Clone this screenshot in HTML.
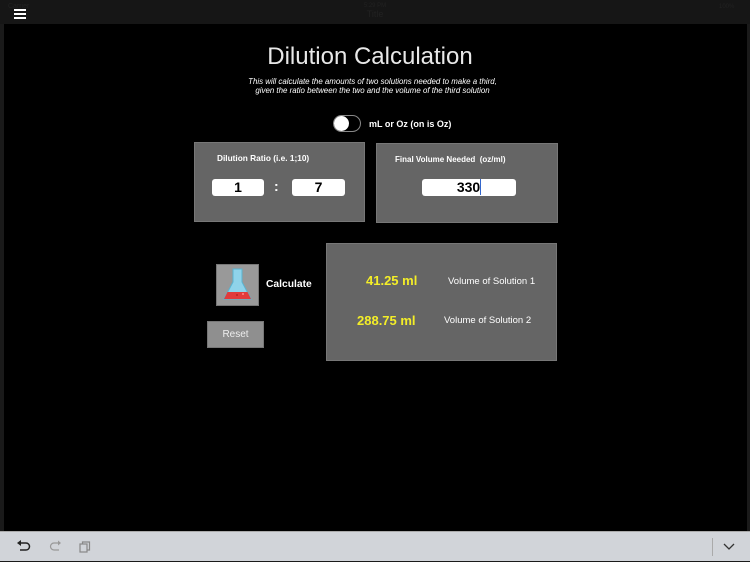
<!DOCTYPE html>
<html><head><meta charset="utf-8"><style>
*{margin:0;padding:0;box-sizing:border-box}
body{width:750px;height:562px;background:#1a1a1a;position:relative;overflow:hidden;font-family:"Liberation Sans",sans-serif}
.abs{position:absolute}
#top{left:0;top:0;width:750px;height:24px;background:#161616}
#main{left:4px;top:24px;width:743px;height:507px;background:#000}
#bot{left:0;top:531px;width:750px;height:30px;background:#d1d4d9;border-top:1px solid #aaa}
.box{background:#656565;border:1px solid #777}
.inp{background:#fff;border-radius:3px;color:#000;font-weight:bold;font-size:14px;text-align:center;line-height:17px;height:17px}
</style></head><body>
<div class="abs" id="top"></div>
<div class="abs" style="left:8px;top:3px;font-size:7px;color:#222">Carrier</div>
<div class="abs" style="left:355px;top:3px;width:40px;text-align:center;font-size:6px;color:#222">5:29 PM</div>
<div class="abs" style="left:355px;top:9px;width:40px;text-align:center;font-size:9px;color:#222">Title</div>
<div class="abs" style="left:14px;top:9px;width:12px;height:2px;background:#fff;box-shadow:0 4px 0 #fff,0 8px 0 #fff"></div>
<div class="abs" id="main"></div>
<div class="abs" style="left:0;top:43px;width:740px;text-align:center;color:#e8e8e8;font-size:24px;font-weight:300">Dilution Calculation</div>
<div class="abs" style="left:0;top:77px;width:745px;text-align:center;color:#fff;font-size:7.9px;font-style:italic;line-height:9px">This will calculate the amounts of two solutions needed to make a third,<br>given the ratio between the two and the volume of the third solution</div>
<div class="abs" style="left:333px;top:115px;width:28px;height:17px;border-radius:9px;border:1.5px solid #888;background:#000"></div>
<div class="abs" style="left:334px;top:116px;width:15px;height:15px;border-radius:50%;background:#fff"></div>
<div class="abs" style="left:369px;top:119px;color:#fff;font-size:9px;font-weight:bold">mL or Oz (on is Oz)</div>
<div class="abs box" style="left:194px;top:142px;width:171px;height:80px"></div>
<div class="abs" style="left:217px;top:153px;color:#fff;font-size:8.3px;font-weight:bold">Dilution Ratio (i.e. 1;10)</div>
<div class="abs inp" style="left:212px;top:179px;width:52px">1</div>
<div class="abs" style="left:274px;top:178px;color:#fff;font-size:14px;font-weight:bold">:</div>
<div class="abs inp" style="left:292px;top:179px;width:53px">7</div>
<div class="abs box" style="left:376px;top:143px;width:182px;height:80px"></div>
<div class="abs" style="left:395px;top:155px;color:#fff;font-size:8px;font-weight:bold">Final Volume Needed&nbsp; (oz/ml)</div>
<div class="abs inp" style="left:422px;top:179px;width:94px"><span style="border-right:1px solid #36c">330</span></div>
<div class="abs" style="left:216px;top:264px;width:43px;height:42px;background:#999;border:1px solid #777">
<svg width="41" height="40" viewBox="0 0 41 40"><path d="M16 4h9v13l9 17h-27l9-17z" fill="#8fd3ea" stroke="#5ab3d0" stroke-width="1"/><path d="M10.5 27h20l3.5 7h-27z" fill="#e23b3b"/><circle cx="20" cy="30" r="1" fill="#b22"/><circle cx="26" cy="29" r="1" fill="#f88"/></svg></div>
<div class="abs" style="left:266px;top:279px;color:#fff;font-size:10.3px;font-weight:bold">Calculate</div>
<div class="abs" style="left:207px;top:321px;width:57px;height:27px;background:#8f8f8f;border:1px solid #777;color:#eee;font-size:10px;text-align:center;line-height:25px">Reset</div>
<div class="abs box" style="left:326px;top:243px;width:231px;height:118px"></div>
<div class="abs" style="left:366px;top:273px;color:#f4ee28;font-size:13px;font-weight:bold">41.25 ml</div>
<div class="abs" style="left:448px;top:276px;color:#fff;font-size:9.5px">Volume of Solution 1</div>
<div class="abs" style="left:357px;top:313px;color:#f4ee28;font-size:13px;font-weight:bold">288.75 ml</div>
<div class="abs" style="left:444px;top:315px;color:#fff;font-size:9.5px">Volume of Solution 2</div>
<div class="abs" style="left:719px;top:0;width:31px;height:24px;font-size:6px;color:#222;padding-top:4px">100%</div>
<div class="abs" id="bot">
<svg class="abs" style="left:16px;top:8px" width="16" height="14" viewBox="0 0 16 14"><path d="M4 3h6a3.5 3.5 0 0 1 0 7H4" fill="none" stroke="#222" stroke-width="1.5"/><path d="M1 3l4-3v6z" fill="#222"/></svg>
<svg class="abs" style="left:47px;top:8px" width="16" height="14" viewBox="0 0 16 14"><path d="M12 3H7a3.5 3.5 0 0 0 0 7h5" fill="none" stroke="#999" stroke-width="1.2"/><path d="M14 3l-3-2.5v5z" fill="#999"/></svg>
<svg class="abs" style="left:78px;top:8px" width="14" height="14" viewBox="0 0 14 14"><rect x="2" y="4" width="7" height="8" fill="none" stroke="#888" stroke-width="1.2"/><path d="M4.5 4V2h7v8h-2.5" fill="none" stroke="#888" stroke-width="1.2"/></svg>
<div class="abs" style="left:712px;top:6px;width:1px;height:18px;background:#aaa"></div>
<svg class="abs" style="left:723px;top:11px" width="12" height="8" viewBox="0 0 12 8"><path d="M1 1l5 5 5-5" fill="none" stroke="#333" stroke-width="1.3"/></svg>
</div>
</body></html>
